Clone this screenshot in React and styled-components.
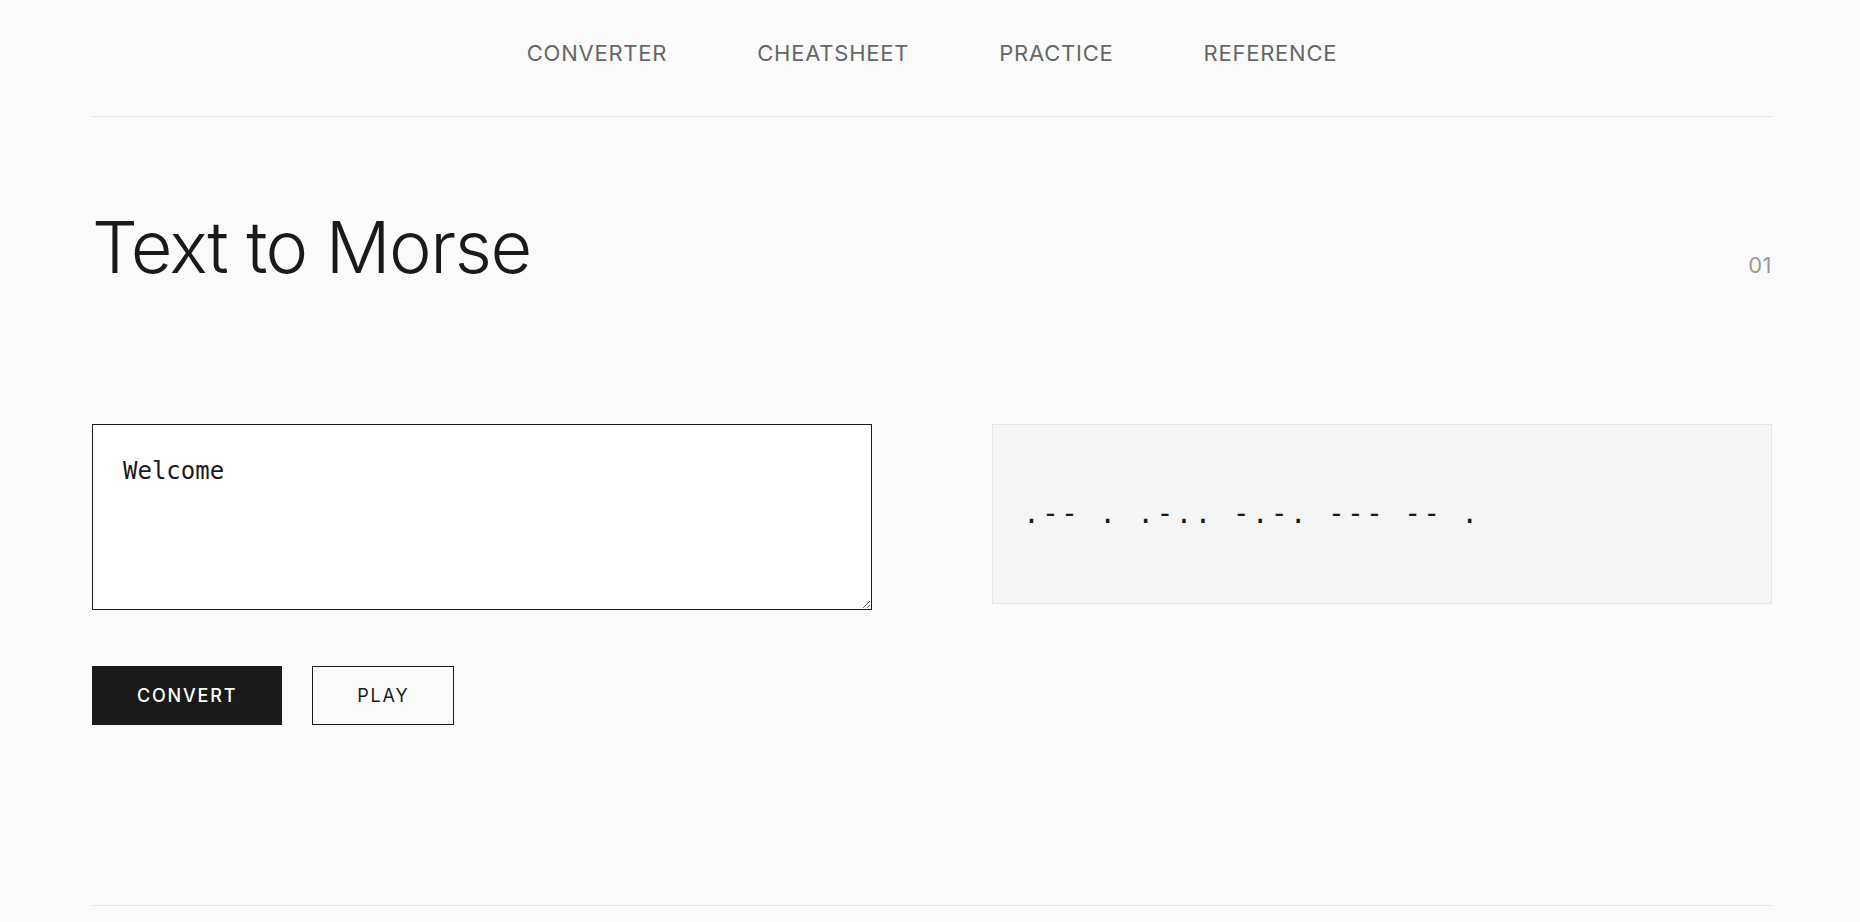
import React, { useState } from "react";
import styled, { createGlobalStyle } from "styled-components";

const Global = createGlobalStyle`
  * { box-sizing: border-box; }
  html, body { margin: 0; padding: 0; background: #fafafa; }
  body { font-family: Inter, "Noto Sans", sans-serif; color: #1a1a1a; }
`;

const Page = styled.div`
  width: 1680px;
  margin: 0 88px 0 92px;
`;

const Header = styled.header`
  display: flex;
  justify-content: center;
  padding: 40px 0 50px;
  border-bottom: 1px solid #e5e5e5;
`;

const Nav = styled.nav`
  display: flex;
  gap: 90px;
`;

const NavLink = styled.a`
  font-size: 22px;
  line-height: 1.2;
  letter-spacing: 0.035em;
  text-transform: uppercase;
  color: #666;
  text-decoration: none;
  font-weight: 400;
`;

const Section = styled.section`
  padding-top: 90px;
`;

const TitleRow = styled.div`
  display: flex;
  justify-content: space-between;
  align-items: baseline;
`;

const Title = styled.h1`
  margin: 0;
  font-size: 72px;
  line-height: 1.1;
  font-weight: 300;
  letter-spacing: -0.02em;
  color: #1a1a1a;
`;

const Index = styled.span`
  font-size: 22px;
  letter-spacing: 0.02em;
  color: #999;
`;

const Grid = styled.div`
  display: grid;
  grid-template-columns: 780px 780px;
  column-gap: 120px;
  margin-top: 137px;
  align-items: start;
`;

const Column = styled.div`
  display: flex;
  flex-direction: column;
`;

const Input = styled.textarea`
  width: 100%;
  height: 186px;
  padding: 28px 30px;
  border: 1px solid #1a1a1a;
  border-radius: 0;
  background: #fff;
  font-family: "DejaVu Sans Mono", "Liberation Mono", monospace;
  font-size: 24px;
  line-height: 1.5;
  color: #1a1a1a;
  outline: none;
  resize: vertical;
  display: block;
`;

const Output = styled.div`
  height: 180px;
  padding: 0 30px;
  display: flex;
  align-items: center;
  background: #f5f5f5;
  border: 1px solid #e5e5e5;
  font-family: "DejaVu Sans Mono", "Liberation Mono", monospace;
  font-size: 28px;
  line-height: 1.5;
  letter-spacing: 2.2px;
  color: #1a1a1a;
  white-space: pre;
`;

const Buttons = styled.div`
  display: flex;
  gap: 30px;
  margin-top: 56px;
`;

const Button = styled.button`
  height: 59px;
  padding: 0 44px;
  font-family: Inter, "Noto Sans", sans-serif;
  font-size: 18px;
  letter-spacing: 0.1em;
  text-transform: uppercase;
  border: 1px solid #1a1a1a;
  border-radius: 0;
  cursor: pointer;
  background: ${(p) => (p.$primary ? "#1a1a1a" : "transparent")};
  color: ${(p) => (p.$primary ? "#fff" : "#1a1a1a")};
  font-weight: ${(p) => (p.$primary ? 500 : 400)};
`;

const Footer = styled.footer`
  margin-top: 180px;
  border-top: 1px solid #e5e5e5;
  height: 40px;
`;

export default function App() {
  const [text, setText] = useState("Welcome");
  return (
    <>
      <Global />
      <Page>
        <Header>
          <Nav>
            <NavLink href="#">Converter</NavLink>
            <NavLink href="#">Cheatsheet</NavLink>
            <NavLink href="#">Practice</NavLink>
            <NavLink href="#">Reference</NavLink>
          </Nav>
        </Header>
        <Section>
          <TitleRow>
            <Title>Text to Morse</Title>
            <Index>01</Index>
          </TitleRow>
          <Grid>
            <Column>
              <Input value={text} onChange={(e) => setText(e.target.value)} />
              <Buttons>
                <Button $primary>Convert</Button>
                <Button>Play</Button>
              </Buttons>
            </Column>
            <Output>{".-- . .-.. -.-. --- -- ."}</Output>
          </Grid>
        </Section>
        <Footer />
      </Page>
    </>
  );
}
